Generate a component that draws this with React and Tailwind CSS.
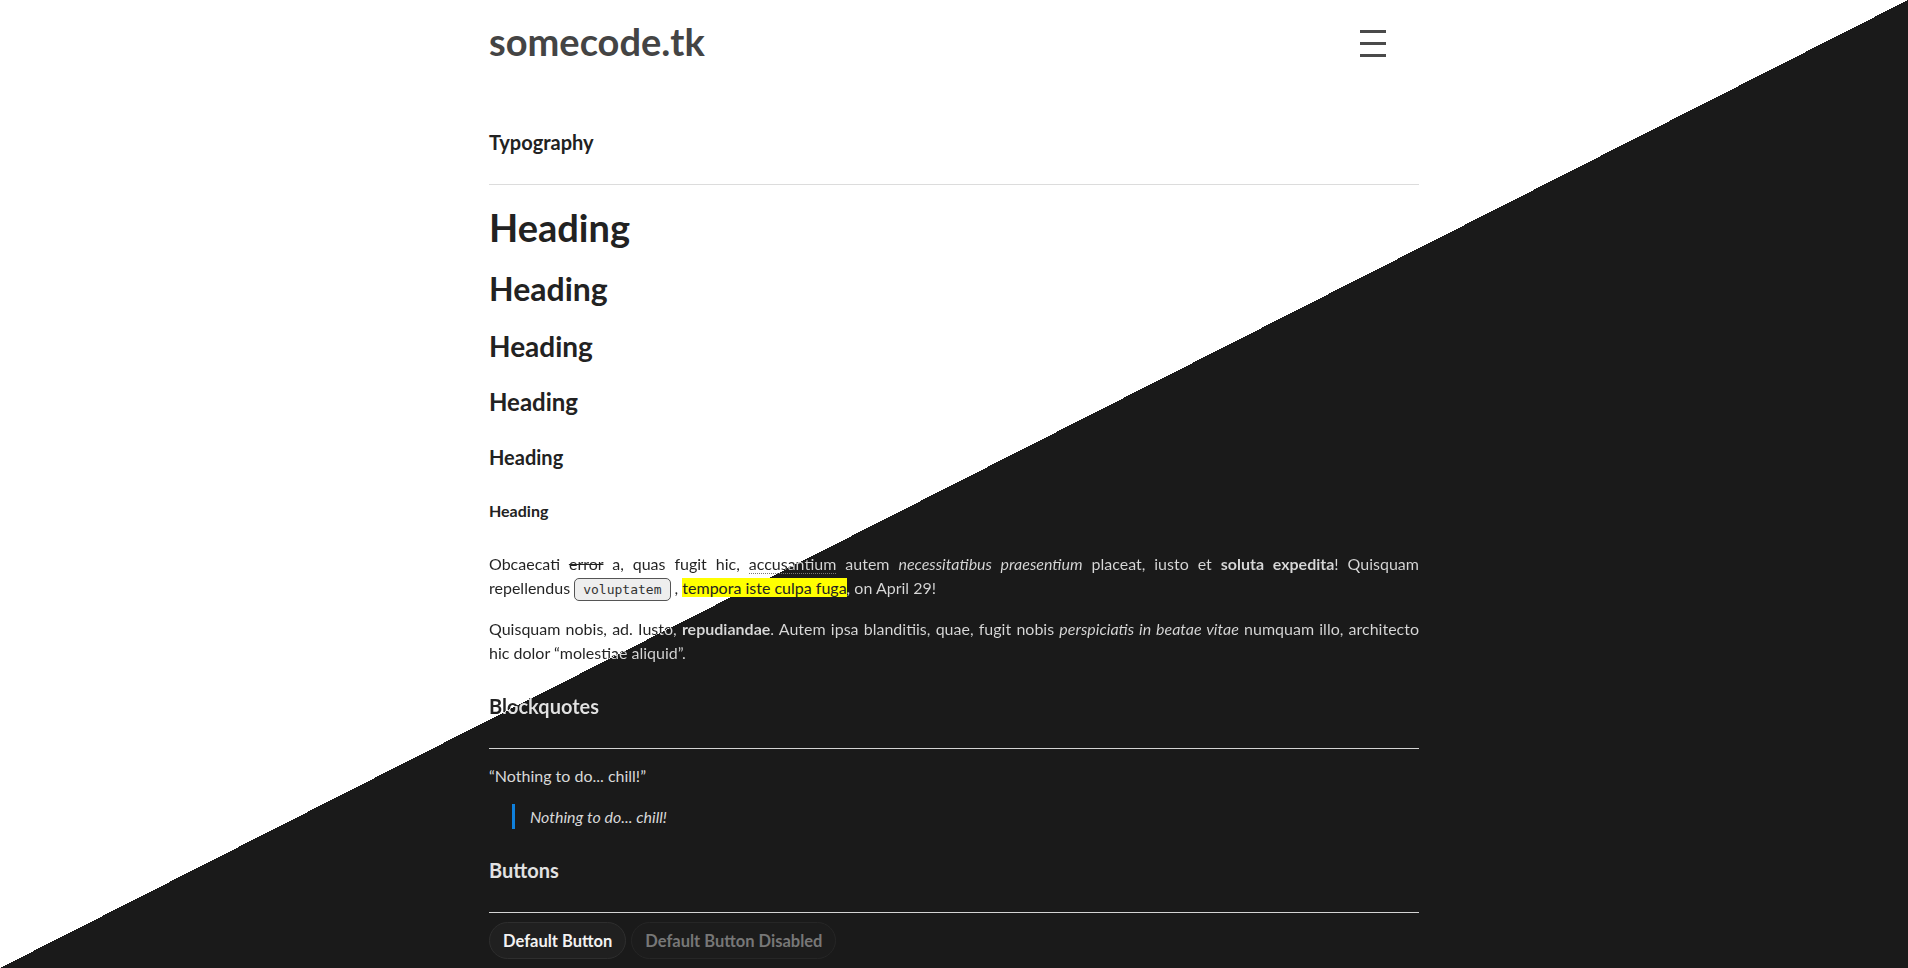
import React from 'react';

const headings = [
  { size: 'text-[38px] leading-[45.6px]', mt: 'mt-[20px]' },
  { size: 'text-[32px] leading-[37.2px]', mt: 'mt-[19px]' },
  { size: 'text-[28px] leading-[33.6px]', mt: 'mt-[23px]' },
  { size: 'text-[24px] leading-[28.8px]', mt: 'mt-[25px]' },
  { size: 'text-[20px] leading-[24px]', mt: 'mt-[28px]' },
  { size: 'text-[16px] leading-[19.2px]', mt: 'mt-[32px]' },
];

// text that crosses the diagonal: a fixed gradient clipped to the glyphs,
// split along the same corner-to-corner line as the page background
const splitText =
  'bg-[linear-gradient(to_bottom_right,#222_50%,#d8d8d8_50%)] bg-fixed bg-clip-text text-transparent';
const splitTitle =
  'bg-[linear-gradient(to_bottom_right,#222_50%,#e2e2e2_50%)] bg-fixed bg-clip-text text-transparent';

const App = () => {
  return (
    <div className="h-screen w-full overflow-hidden bg-[linear-gradient(to_bottom_right,#fff_50%,#1a1a1a_50%)]">
      <div className="mx-auto w-[930px] font-[Lato,sans-serif] text-[#222]">
        {/* Header */}
        <header className="flex justify-between pt-[17px]">
          <div className="text-[38px] font-bold leading-[48px] text-[#444]">somecode.tk</div>
          <button className="mr-[33px] mt-[13px] flex h-fit flex-col gap-[9px]">
            <span className="block h-[3px] w-[26px] bg-[#4a4a4a]" />
            <span className="block h-[3px] w-[26px] bg-[#4a4a4a]" />
            <span className="block h-[3px] w-[26px] bg-[#4a4a4a]" />
          </button>
        </header>

        {/* Typography */}
        <h2 className="mt-[65px] text-[20px] font-bold leading-[24px]">Typography</h2>
        <div className="mt-[30px] h-px bg-[#dcdcdc]" />

        {headings.map((h, i) => (
          <div key={i} className={`${h.mt} ${h.size} font-bold`}>
            Heading
          </div>
        ))}

        <p className={`mt-[32px] text-justify text-[16px] leading-[24px] ${splitText}`}>
          Obcaecati <s className="decoration-[#222]">error</s> a, quas fugit hic,{' '}
          <abbr title="accusantium" className="no-underline border-b border-dotted border-[#777]">
            accusantium
          </abbr>{' '}
          autem <em>necessitatibus praesentium</em> placeat, iusto et <strong>soluta expedita</strong>! Quisquam
          repellendus{' '}
          <code className="inline-block rounded-[5px] border border-[#555] bg-[#eeeeee] px-[8px] py-[2px] font-['DejaVu_Sans_Mono',monospace] text-[13px] leading-[17px] text-[#333]">
            voluptatem
          </code>{' '}
          , <mark className="bg-[#ffff00] text-[#222]">tempora iste culpa fuga</mark>, on April 29!
        </p>

        <p className={`mt-[16px] text-justify text-[16px] leading-[24px] ${splitText}`}>
          Quisquam nobis, ad. Iusto, <strong>repudiandae</strong>. Autem ipsa blanditiis, quae, fugit nobis{' '}
          <em>perspiciatis in beatae vitae</em> numquam illo, architecto hic dolor “molestiae aliquid”.
        </p>

        {/* Blockquotes */}
        <h2 className={`mt-[29px] text-[20px] font-bold leading-[24px] ${splitTitle}`}>Blockquotes</h2>
        <div className="mt-[30px] h-px bg-[#d4d4d4]" />

        <p className="mt-[15px] text-[16px] leading-[24px] text-[#d8d8d8]">“Nothing to do... chill!”</p>
        <blockquote className="ml-[23px] mt-[16px] border-l-[3px] border-[#0f80dc] pl-[15px] text-[16px] italic leading-[25px] text-[#d8d8d8]">
          Nothing to do... chill!
        </blockquote>

        {/* Buttons */}
        <h2 className="mt-[29px] text-[20px] font-bold leading-[24px] text-[#e2e2e2]">Buttons</h2>
        <div className="mt-[30px] h-px bg-[#d4d4d4]" />

        <div className="mt-[9px] flex gap-[5px]">
          <button className="h-[37px] rounded-full border border-[#2e2e2e] bg-[#202020] px-[13px] text-[16.5px] font-bold text-[#f2f2f2]">
            Default Button
          </button>
          <button
            disabled
            className="h-[37px] rounded-full border border-[#262626] bg-[#1c1c1c] px-[13px] text-[16.5px] font-bold text-[#777]"
          >
            Default Button Disabled
          </button>
        </div>
      </div>
    </div>
  );
};

export default App;
